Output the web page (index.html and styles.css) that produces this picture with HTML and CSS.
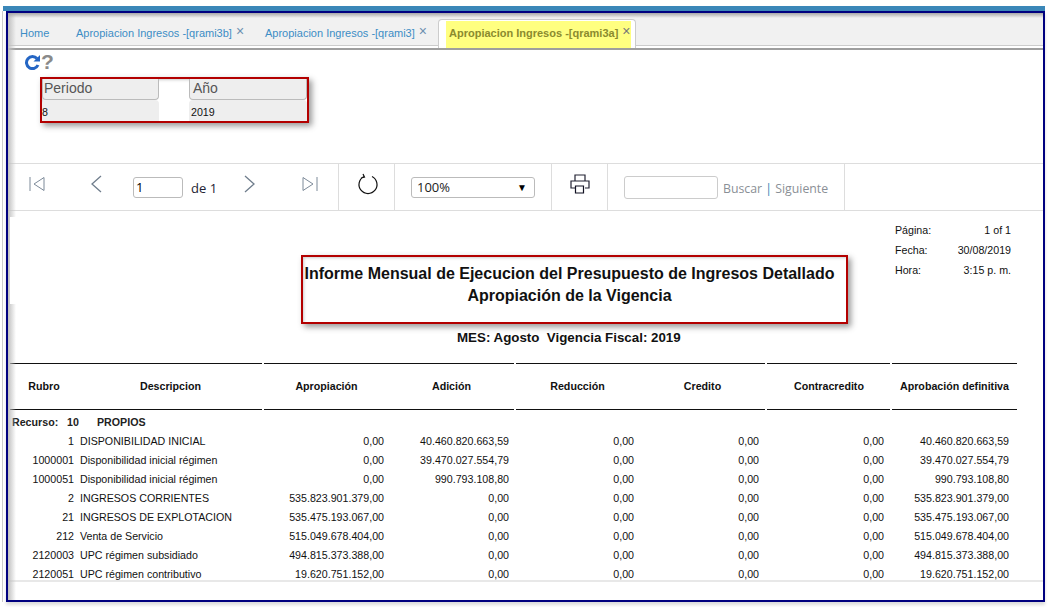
FILE: index.html
```html
<!DOCTYPE html>
<html lang="es">
<head>
    <meta charset="UTF-8">
    <title>Apropiacion Ingresos</title>
    <link rel="stylesheet" href="styles.css">
</head>
<body>
    <div class="topbar"></div>
    <div class="frame">
        <div class="frame-shadow"></div>
        <ul class="tabs">
            <li class="tab tab-home">Home</li>
            <li class="tab tab-one">Apropiacion Ingresos -[qrami3b]<span class="tab-x">×</span></li>
            <li class="tab tab-two">Apropiacion Ingresos -[qrami3]<span class="tab-x">×</span></li>
            <li class="tab tab-active"><span class="tab-label">Apropiacion Ingresos -[qrami3a]<span class="tab-x">×</span></span></li>
        </ul>

        <div class="actions">
            <svg class="icon-reload" width="17" height="15" viewBox="0 0 17 15">
                <path d="M13 3.600A6 6 0 1 0 14 10" fill="none" stroke="#2566c4" stroke-width="3"/>
                <path d="M9.500 6.500H16V0z" fill="#2566c4"/>
            </svg>
            <span class="icon-help">?</span>
        </div>

        <div class="params">
            <div class="param param-first">
                <div class="param-label">Periodo</div>
                <div class="param-value param-value-flush">8</div>
            </div>
            <div class="param">
                <div class="param-label">Año</div>
                <div class="param-value">2019</div>
            </div>
        </div>

        <div class="toolbar">
            <div class="tool tool-nav">
                <svg class="nav-first" width="16" height="16" viewBox="0 0 16 16"><path d="M1 1v14M15 1.500 5 8l10 6.500z" fill="none" stroke="#7d8a99"/></svg>
                <svg class="nav-prev" width="12" height="18" viewBox="0 0 12 18"><path d="M11 1 2 9l9 8" fill="none" stroke="#6f7d8c" stroke-width="1.300"/></svg>
                <input class="page-input" type="text" value="1">
                <span class="page-of">de 1</span>
                <svg class="nav-next" width="12" height="18" viewBox="0 0 12 18"><path d="m1 1 9 8-9 8" fill="none" stroke="#6f7d8c" stroke-width="1.300"/></svg>
                <svg class="nav-last" width="16" height="16" viewBox="0 0 16 16"><path d="M15 1v14M1 1.500 11 8 1 14.500z" fill="none" stroke="#7d8a99"/></svg>
            </div>
            <div class="tool tool-refresh">
                <svg width="22" height="22" viewBox="0 0 22 22"><path d="M7 3.500a9 9 0 1 0 8 0M6 1l1.500 3L4 5" fill="none" stroke="#111" stroke-width="1.200"/></svg>
            </div>
            <div class="tool tool-zoom">
                <div class="zoom-select">100%<span class="zoom-arrow">▼</span></div>
            </div>
            <div class="tool tool-print">
                <svg width="21" height="20" viewBox="0 0 21 20">
                    <path d="M5 7V1h10v6M5 14H1V7h18v7h-4" fill="none" stroke="#223" stroke-width="1.200"/>
                    <path d="M5.500 12h8v7h-8z" fill="#fff" stroke="#112" stroke-width="1.200"/>
                </svg>
            </div>
            <div class="tool tool-find">
                <input class="find-input" type="text">
                <span class="find-links">Buscar <span class="find-sep">|</span> Siguiente</span>
            </div>
        </div>

        <div class="report">
            <div class="report-info">
                <div class="info-row"><span>Página:</span><span>1 of 1</span></div>
                <div class="info-row"><span>Fecha:</span><span>30/08/2019</span></div>
                <div class="info-row"><span>Hora:</span><span>3:15 p. m.</span></div>
            </div>
            <div class="report-title">
                Informe Mensual de Ejecucion del Presupuesto de Ingresos Detallado<br>
                Apropiación de la Vigencia
            </div>
            <div class="report-sub">MES: Agosto&nbsp; Vigencia Fiscal: 2019</div>

            <div class="rules">
                <i class="rule rule-a"></i><i class="rule rule-b"></i><i class="rule rule-c"></i><i class="rule rule-d"></i><i class="rule rule-e"></i>
            </div>
            <div class="row row-head">
                <span>Rubro</span>
                <span>Descripcion</span>
                <span>Apropiación</span>
                <span>Adición</span>
                <span>Reducción</span>
                <span>Credito</span>
                <span>Contracredito</span>
                <span>Aprobación definitiva</span>
            </div>
            <div class="rules">
                <i class="rule rule-a"></i><i class="rule rule-b"></i><i class="rule rule-c"></i><i class="rule rule-d"></i><i class="rule rule-e"></i>
            </div>

            <div class="recurso"><span>Recurso:</span><span>10</span><span>PROPIOS</span></div>

            <div class="row"><span>1</span><span>DISPONIBILIDAD INICIAL</span><span>0,00</span><span>40.460.820.663,59</span><span>0,00</span><span>0,00</span><span>0,00</span><span>40.460.820.663,59</span></div>
            <div class="row"><span>1000001</span><span>Disponibilidad inicial régimen</span><span>0,00</span><span>39.470.027.554,79</span><span>0,00</span><span>0,00</span><span>0,00</span><span>39.470.027.554,79</span></div>
            <div class="row"><span>1000051</span><span>Disponibilidad inicial régimen</span><span>0,00</span><span>990.793.108,80</span><span>0,00</span><span>0,00</span><span>0,00</span><span>990.793.108,80</span></div>
            <div class="row"><span>2</span><span>INGRESOS CORRIENTES</span><span>535.823.901.379,00</span><span>0,00</span><span>0,00</span><span>0,00</span><span>0,00</span><span>535.823.901.379,00</span></div>
            <div class="row"><span>21</span><span>INGRESOS DE EXPLOTACION</span><span>535.475.193.067,00</span><span>0,00</span><span>0,00</span><span>0,00</span><span>0,00</span><span>535.475.193.067,00</span></div>
            <div class="row"><span>212</span><span>Venta de Servicio</span><span>515.049.678.404,00</span><span>0,00</span><span>0,00</span><span>0,00</span><span>0,00</span><span>515.049.678.404,00</span></div>
            <div class="row"><span>2120003</span><span>UPC régimen subsidiado</span><span>494.815.373.388,00</span><span>0,00</span><span>0,00</span><span>0,00</span><span>0,00</span><span>494.815.373.388,00</span></div>
            <div class="row"><span>2120051</span><span>UPC régimen contributivo</span><span>19.620.751.152,00</span><span>0,00</span><span>0,00</span><span>0,00</span><span>0,00</span><span>19.620.751.152,00</span></div>
        </div>
    </div>
</body>
</html>
```

FILE: styles.css
```css
html, body { margin: 0; height: 608px; overflow: hidden; background: #fff; }
body { font-family: "Liberation Sans", Arial, sans-serif; color: #111; padding-top: 6px; box-sizing: border-box; }

.topbar { height: 5px; margin: 0 4px 0 3px; background: #3a87b8; }

.frame {
    position: relative;
    box-sizing: border-box;
    width: 1039px;
    height: 591px;
    margin-left: 6px;
    border: 2px solid #00007f;
    background: #fff;
    box-shadow: 0 3px 3px #ddd, -3px 0 0 #fff, -4px 0 0 #ccc;
}
/* soft screenshot shadow along the top and left of the frame */
.frame-shadow {
    position: absolute;
    top: 0; left: 0; right: 0; bottom: 0;
    background:
        linear-gradient(#a8a8a8, rgba(200, 200, 200, 0) 5px),
        linear-gradient(to right, #c0c0c0, rgba(220, 220, 220, 0) 8px);
    pointer-events: none;
    z-index: 2;
}
.frame-shadow::after {
    content: "";
    position: absolute;
    top: 204px;
    left: 2px;
    width: 7px;
    height: 87px;
    background: #fff;
}

/* tabs */
.tabs {
    display: flex;
    list-style: none;
    margin: 0;
    padding: 6px 0 0 0;
    height: 29px;
    background: linear-gradient(#f1f1f1 32px, #ccc 32px, #ccc 33px, #fff 33px);
    border-bottom: 2px solid #9e9e9e;
    font-size: 11px;
    color: #3c8dc5;
}
.tab { height: 29px; line-height: 28px; white-space: nowrap; }
.tab-home { margin-left: 12px; width: 56px; }
.tab-one { width: 189px; }
.tab-two { width: 173px; }
.tab-x { font-size: 14px; line-height: 1; margin-left: 4px; position: relative; top: -1px; color: #6d8fb0; }
.tab-active {
    box-sizing: border-box;
    width: 198px;
    padding: 1px 4px 0 7px;
    background: #fff;
    border: 1px solid #ccc;
    border-bottom: 0;
    border-radius: 4px 4px 0 0;
    color: #8b8b2e;
    font-weight: bold;
}
.tab-label { display: block; height: 27px; padding-left: 3px; background: #ffff80; line-height: 24px; }
.tab-active .tab-x { font-weight: normal; color: #777; }

/* refresh + help */
.actions { display: flex; align-items: center; height: 20px; padding: 4px 0 0 16px; box-sizing: border-box; }
.icon-reload { margin-top: 1px; }
.icon-help { font-size: 21px; line-height: 16px; font-weight: bold; color: #8a8a8a; }

/* parameter box */
.params {
    display: flex;
    gap: 30px;
    box-sizing: border-box;
    width: 269px;
    height: 46px;
    margin: 7px 0 0 32px;
    border: 2px solid #b30000;
    box-shadow: 3px 3px 6px #999, inset 2px 2px 3px -1px #ccc;
}
.param { width: 118px; }
.param-first { width: 117px; }
.param-label {
    box-sizing: border-box;
    height: 21px;
    padding-left: 3px;
    background: #eee;
    border: 1px solid #bbb;
    border-top: 0;
    border-radius: 0 0 4px 4px;
    font-size: 14px;
    line-height: 18px;
    color: #555;
}
.param-first .param-label { padding-left: 1px; }
.param-value {
    height: 21px;
    padding-left: 2px;
    background: #eee;
    border-radius: 4px 4px 0 0;
    font-size: 10.670px;
    line-height: 24px;
}
.param-value-flush { padding-left: 0; }

/* report toolbar */
.toolbar {
    display: flex;
    box-sizing: border-box;
    height: 48px;
    margin-top: 40px;
    border-top: 1px solid #ddd;
    border-bottom: 1px solid #ddd;
    font-family: "Open Sans", sans-serif;
    font-size: 13px;
}
.tool { display: flex; align-items: center; box-sizing: border-box; border-right: 1px solid #ddd; }
.tool svg { margin-bottom: 6px; }
.tool-nav { width: 331px; padding-left: 21px; }
.nav-prev { margin-left: 45px; }
.page-input {
    box-sizing: border-box;
    width: 50px;
    height: 21px;
    margin: 1px 0 0 31px;
    padding: 0 2px 2px;
    border: 1px solid #bbb;
    border-radius: 3px;
    font-family: inherit;
    font-size: 13px;
}
.page-of { margin: 1px 0 0 8px; width: 27px; color: #223; white-space: nowrap; }
.nav-next { margin-left: 26px; }
.nav-last { margin-left: 46px; }
.tool-refresh { width: 56px; padding-left: 18px; }
.tool-zoom { width: 157px; padding-left: 16px; }
.zoom-select {
    display: flex;
    justify-content: space-between;
    box-sizing: border-box;
    width: 124px;
    height: 21px;
    padding: 0 7px 0 5px;
    border: 1px solid #bbb;
    border-radius: 3px;
    line-height: 18px;
    color: #222;
}
.zoom-arrow { font-size: 10px; color: #000; }
.tool-print { width: 56px; padding-left: 18px; }
.tool-find { width: 237px; padding: 1px 0 0 16px; }
.find-input { box-sizing: border-box; width: 94px; height: 23px; border: 1px solid #ccc; border-radius: 3px; }
.find-links { margin: 2px 0 0 5px; color: #8a8f96; font-size: 12.300px; white-space: nowrap; }
.find-sep { color: #2f7fb5; }

/* report body */
.report { height: 369px; overflow: hidden; border-bottom: 2px solid #e8e8e8; padding-left: 2px; font-size: 10.670px; }
.report-info { width: 116px; margin: 9px 0 0 885px; height: 60px; }
.info-row { display: flex; justify-content: space-between; height: 20px; line-height: 20px; }

.report-title {
    box-sizing: border-box;
    width: 547px;
    height: 69px;
    margin: -25px 0 0 291px;
    padding: 6px 10px 0 0;
    border: 2px solid #b30000;
    box-shadow: 3px 3px 6px #999, inset 2px 2px 3px -1px #ccc;
    font-size: 16px;
    font-weight: bold;
    line-height: 22px;
    text-align: center;
}
.report-sub { height: 39px; padding-left: 447px; line-height: 28px; font-size: 13.330px; font-weight: bold; }

.rules { display: flex; gap: 2px; width: 1007px; height: 1px; }
.rule { display: block; height: 1px; background: #111; }
.rule-a { width: 252px; }
.rule-b { width: 250px; }
.rule-c { width: 249px; }
.rule-d { width: 123px; }
.rule-e { width: 125px; }

.row {
    display: grid;
    grid-template-columns: 64px 185px repeat(6, 125px);
    height: 19px;
    line-height: 19px;
    text-align: right;
    white-space: nowrap;
}
.row > :nth-child(2) { padding-left: 6px; text-align: left; }
.row-head { height: 45px; line-height: 45px; font-weight: bold; }
.row-head > span:nth-child(n) { text-align: center; padding-left: 10px; }
.row-head > span:nth-child(1) { padding-left: 4px; }
.row-head > span:nth-child(2) { padding-left: 8px; }
.row-head > span:nth-child(5), .row-head > span:nth-child(6) { padding-left: 12px; }
.row-head > span:nth-child(7) { padding-left: 15px; }
.row-head > span:nth-child(8) { padding-left: 16px; }

.recurso { display: flex; height: 22px; padding-left: 2px; line-height: 24px; font-weight: bold; color: #222; }
.recurso span:nth-child(1) { width: 55px; }
.recurso span:nth-child(2) { width: 30px; }
```
